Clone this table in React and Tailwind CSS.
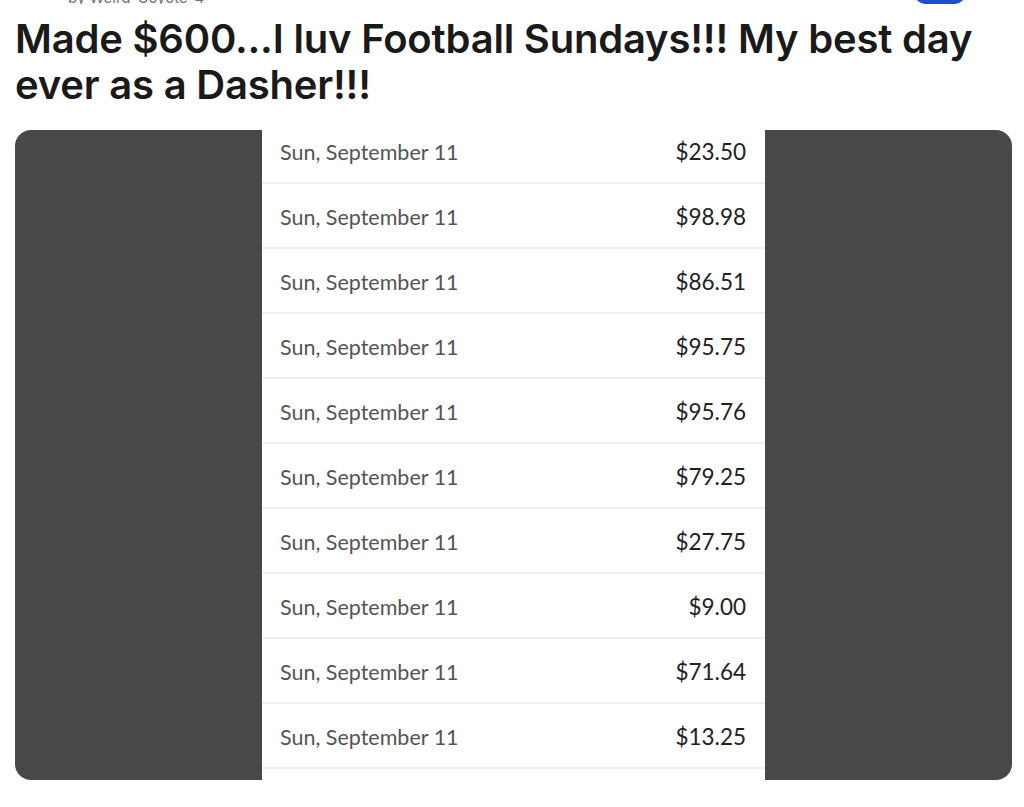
import React from "react";

const rows = [
  "$23.50",
  "$98.98",
  "$86.51",
  "$95.75",
  "$95.76",
  "$79.25",
  "$27.75",
  "$9.00",
  "$71.64",
  "$13.25",
  "",
];

export default function App() {
  return (
    <div className="w-[1024px] h-[807px] bg-white overflow-hidden font-['Inter',sans-serif]">
      {/* byline, mostly scrolled off */}
      <div className="flex items-end justify-between h-[4px] pl-[68px] pr-[59px] overflow-hidden">
        <span className="text-[15px] leading-[15px] text-gray-500 -mb-[1px]">by Weird-Coyote-4</span>
        <span className="w-[50px] h-[10px] rounded-b-full bg-[#1d4ed8]"></span>
      </div>

      <h1 className="mt-[12px] px-[15px] text-[40px] leading-[46px] font-semibold text-[#1a1a1b] tracking-[-0.2px]">
        Made $600...I luv Football Sundays!!! My best day ever as a Dasher!!!
      </h1>

      <div className="mt-[22px] ml-[15px] w-[997px] h-[650px] rounded-[16px] bg-[#484848] overflow-hidden flex justify-center">
        <div className="w-[503px] bg-white -mt-[11px] flex flex-col font-['Lato',sans-serif]">
          {rows.map((amt, i) => (
            <div
              key={i}
              className="h-[65px] shrink-0 flex items-center justify-between pt-[3px] pl-[18px] pr-[19px] border-b-[2px] border-[#efefef]"
            >
              <span className="text-[21.5px] text-[#555555]">{amt ? "Sun, September 11" : ""}</span>
              <span className="text-[22.5px] text-[#222222]">{amt}</span>
            </div>
          ))}
        </div>
      </div>
    </div>
  );
}
